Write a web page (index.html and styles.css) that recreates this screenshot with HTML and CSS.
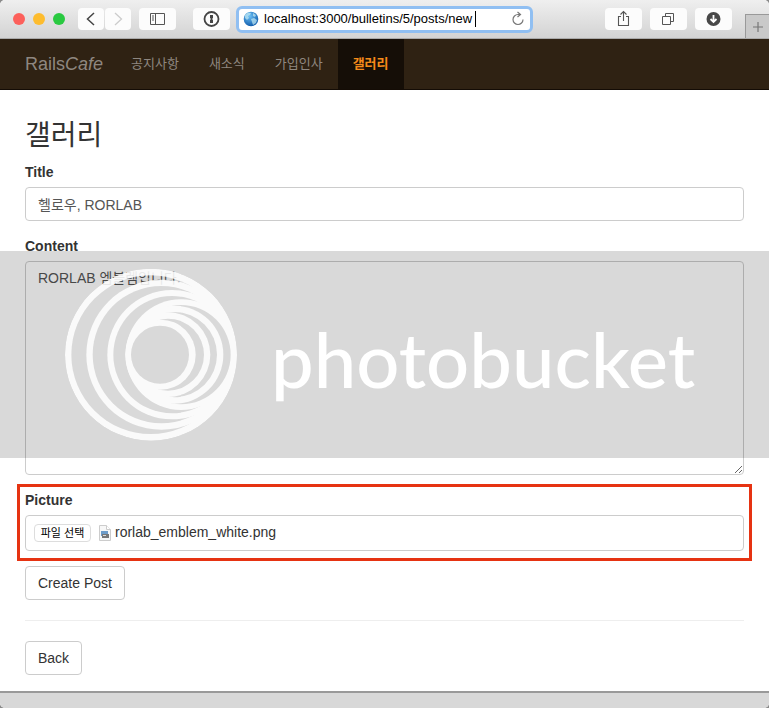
FILE: index.html
```html
<!DOCTYPE html>
<html lang="ko">
<head>
<meta charset="utf-8">
<meta name="viewport" content="width=device-width, initial-scale=1">
<title>RailsCafe</title>
<link rel="stylesheet" href="styles.css">
</head>
<body>
<div class="window">
  <header class="toolbar">
    <div class="lights"><span class="light red"></span><span class="light yellow"></span><span class="light green"></span></div>
    <div class="history">
      <button class="tool" type="button" aria-label="Back"><svg width="26" height="22" viewBox="0 0 26 22"><path d="M16 5L9.500 11l6.500 6" fill="none" stroke="#444" stroke-width="1.500"/></svg></button>
      <button class="tool" type="button" aria-label="Forward"><svg width="25" height="22" viewBox="0 0 25 22"><path d="M10 5l6.500 6-6.500 6" fill="none" stroke="#ccc" stroke-width="1.300"/></svg></button>
    </div>
    <button class="tool wide" type="button" aria-label="Sidebar"><svg width="37" height="22" viewBox="0 0 37 22"><path d="M11.500 5.500h14v11h-14zM16.500 5.500v11M13 8h2M13 10h2M13 12h2" fill="none" stroke="#555"/></svg></button>
    <button class="tool wide password" type="button" aria-label="Passwords"><svg width="37" height="22" viewBox="0 0 37 22"><circle cx="18.500" cy="11" r="7" fill="none" stroke="#444" stroke-width="1.800"/><path d="M17 7h3v3l-1 1 1 1v3h-3v-3l1-1-1-1z" fill="#444"/></svg></button>
    <div class="address">
      <svg width="16" height="16" viewBox="0 0 16 16"><defs><radialGradient id="sea" cx=".4" cy=".3" r=".7"><stop offset="0" stop-color="#6cc0f5"/><stop offset="1" stop-color="#135fae"/></radialGradient></defs><circle cx="8" cy="8" r="7.300" fill="url(#sea)"/><path d="M2 4l3-2.500 3 .5-1 2-2 1 1 2-2 2-2-2zM8 8l3-1 3 2-1 3-3 2-1-3zM10 2l3 2-1 2-2-1z" fill="#c5ebf4" opacity=".7"/></svg>
      <input class="url" type="text" aria-label="Address" value="localhost:3000/bulletins/5/posts/new">
      <span class="caret"></span>
      <button class="reload" type="button" aria-label="Reload"><svg width="14" height="16" viewBox="0 0 14 16"><path d="M9 3.500H7a5 5 0 1 0 5 5M6.500 1L9.500 3.500 6.500 6" fill="none" stroke="#777" stroke-width="1.200"/></svg></button>
    </div>
    <div class="actions">
      <button class="tool wide" type="button" aria-label="Share"><svg width="37" height="22" viewBox="0 0 37 22"><path d="M16 8.500h-2.500v9h10v-9H21M18.500 13V4M15.500 6.500l3-3 3 3" fill="none" stroke="#555" stroke-width="1.100"/></svg></button>
      <button class="tool wide" type="button" aria-label="Show tabs"><svg width="37" height="22" viewBox="0 0 37 22"><path d="M12.500 8.500h8v8h-8zM15.500 8.500v-3h8v8h-3" fill="none" stroke="#555"/></svg></button>
      <button class="tool wide" type="button" aria-label="Downloads"><svg width="37" height="22" viewBox="0 0 37 22"><circle cx="18.500" cy="11" r="7" fill="#484848"/><path d="M18.500 7v7M15.500 11l3 3 3-3" fill="none" stroke="#fff" stroke-width="1.800"/></svg></button>
    </div>
    <button class="new-tab" type="button" aria-label="New tab"><svg width="12" height="12" viewBox="0 0 12 12"><path d="M6 1v10M1 6h10" stroke="#777" stroke-width="1.200"/></svg></button>
  </header>

  <nav class="navbar">
    <a class="brand" href="#">Rails<em>Cafe</em></a>
    <a class="item" href="#">공지사항</a>
    <a class="item" href="#">새소식</a>
    <a class="item" href="#">가입인사</a>
    <a class="item active" href="#">갤러리</a>
  </nav>

  <main class="page">
    <h2>갤러리</h2>
    <form>
      <div class="group">
        <label for="title">Title</label>
        <input class="control" id="title" type="text" value="헬로우, RORLAB">
      </div>
      <div class="group content">
        <label for="content">Content</label>
        <textarea class="control" id="content">RORLAB 엠블렘입니다.</textarea>
        <div class="watermark">
          <svg width="172" height="174" viewBox="75 57 516 518">
            <mask id="rings" maskUnits="userSpaceOnUse" x="75" y="57" width="516" height="518">
              <g fill="#fff"><circle cx="333" cy="315" r="258"/></g>
              <circle cx="332" cy="315" r="238"/>
              <circle cx="364" cy="315" r="225" fill="#fff"/>
              <circle cx="364" cy="315" r="206"/>
              <circle cx="396" cy="315" r="194" fill="#fff"/>
              <circle cx="396" cy="315" r="176"/>
              <circle cx="423" cy="315" r="166" fill="#fff"/>
              <circle cx="423" cy="315" r="149"/>
              <circle cx="403" cy="315" r="147" fill="#fff"/>
              <circle cx="403" cy="315" r="128"/>
              <circle cx="384" cy="315" r="127" fill="#fff"/>
              <circle cx="384" cy="315" r="108"/>
              <circle cx="362" cy="315" r="105" fill="#fff"/>
              <circle cx="360" cy="315" r="87"/>
            </mask>
            <circle cx="333" cy="315" r="258" fill="#fff" mask="url(#rings)"/>
          </svg>
          <span class="wordmark">photobucket</span>
        </div>
      </div>
      <div class="highlight">
        <label for="picture">Picture</label>
        <label class="control picker" for="picture">
          <input class="file" id="picture" type="file">
          <span class="choose">파일 선택</span>
          <svg width="12" height="16" viewBox="0 0 12 16"><path d="M.5.500h7l4 4v11H.5z" fill="#f7f7f7" stroke="#ccc"/><path d="M7.500.500v4h4" fill="#fff" stroke="#ccc"/><path d="M2 6h7v5H2z" fill="#6d9cc9"/><path d="M3 9h7v4H3z" fill="#777"/><path d="M4 10h3v1H4z" fill="#ddd"/></svg>
          <span class="filename">rorlab_emblem_white.png</span>
        </label>
      </div>
      <button class="btn" type="submit">Create Post</button>
    </form>
    <hr>
    <a class="btn" href="#">Back</a>
  </main>
  <footer class="statusbar"></footer>
</div>
</body>
</html>
```
FILE: styles.css
```css
* { box-sizing: border-box; }

body {
  margin: 0;
  background: #8a8a8a;
  color: #333;
  font: 14px/20px "Liberation Sans", "Noto Sans CJK KR", sans-serif;
}

button, input, textarea { font: inherit; }
a { text-decoration: none; }
svg { display: block; flex: none; }

.window {
  display: flex;
  flex-direction: column;
  min-height: 100vh;
  overflow: hidden;
  border-radius: 5px;
  background: #fff;
}

.toolbar {
  display: flex;
  align-items: center;
  height: 39px;
  padding-left: 13px;
  border-bottom: 1px solid #aaa;
  background: linear-gradient(#efefef, #d3d3d3);
}

.lights { display: flex; gap: 8px; margin-right: 13px; }
.light { width: 12px; height: 12px; border-radius: 50%; }
.red { background: #fc605b; }
.yellow { background: #fdbc2e; }
.green { background: #29c940; }

.tool {
  width: 26px;
  height: 22px;
  padding: 0;
  border: 0;
  border-radius: 4px;
  background: #fcfcfc;
}

.history { display: flex; gap: 1px; margin-right: 8px; }
.wide { width: 37px; }
.password { margin-left: 17px; }

.address {
  display: flex;
  flex: 1;
  align-items: center;
  height: 27px;
  margin: 0 72px 0 6px;
  padding: 0 5px 0 4px;
  border: 3px solid #90bff2;
  border-radius: 6px;
  background: #fff;
}

.url {
  width: 216px;
  padding: 0 0 0 5px;
  border: 0;
  outline: 0;
  background: none;
  color: #000;
  font-size: 13px;
}

.caret { width: 1px; height: 16px; background: #000; }
.reload { margin-left: auto; padding: 0; border: 0; background: none; }
.actions { display: flex; gap: 8px; margin-right: 13px; }

.new-tab {
  display: flex;
  align-items: center;
  justify-content: center;
  align-self: flex-end;
  width: 24px;
  height: 24px;
  padding: 0;
  border: solid #999;
  border-width: 1px 0 0 1px;
  background: #c9c9c9;
}

.navbar {
  display: flex;
  height: 51px;
  padding-left: 25px;
  border-bottom: 1px solid #140c05;
  background: #2f2213;
  line-height: 50px;
}

.brand { padding-right: 13px; color: #8e8780; font-size: 18px; }
.item { padding: 0 15px; color: #8e8780; font-size: 13px; }
.active { background: #150e07; color: #f58b1a; font-weight: 700; }

.page { flex: 1; padding: 29px 25px 16px; }

h2 {
  margin: 0 0 10px;
  font-size: 28px;
  font-weight: 400;
  line-height: 33px;
}

label { display: block; margin-bottom: 5px; font-weight: 700; }
.group { margin-bottom: 15px; }
.content { position: relative; margin-bottom: 9px; }

.control {
  display: block;
  width: 100%;
  height: 34px;
  margin: 0;
  padding: 6px 12px;
  border: 1px solid #ccc;
  border-radius: 4px;
  background: #fff;
  color: #555;
}

textarea.control { height: 214px; }

/* Translucent band across the full window width, over the text box */
.watermark {
  position: absolute;
  top: 15px;
  right: -25px;
  left: -25px;
  display: flex;
  align-items: center;
  gap: 34px;
  height: 207px;
  padding-left: 65px;
  background: rgba(0, 0, 0, .15);
  color: #fff;
  pointer-events: none;
}

.watermark svg { opacity: .88; }
.wordmark { padding-top: 8px; font: 500 76px/80px Lato, sans-serif; }

.highlight {
  margin: 0 -8px 5px;
  padding: 3px 5px 7px;
  border: 3px solid #e63312;
}

.picker {
  display: flex;
  align-items: center;
  height: 36px;
  padding: 0 8px;
  color: #333;
  font-weight: 400;
}

.file { position: absolute; width: 1px; height: 1px; opacity: 0; }

.choose {
  width: 57px;
  margin-right: 8px;
  border: 1px solid #ddd;
  border-radius: 4px;
  color: #000;
  font-size: 11px;
  line-height: 16px;
  text-align: center;
}

.filename { margin-left: 4px; padding-bottom: 2px; }

.btn {
  display: inline-block;
  height: 34px;
  padding: 6px 12px;
  border: 1px solid #ccc;
  border-radius: 4px;
  background: #fff;
  color: #333;
}

form .btn { display: block; }
hr { margin: 20px 0; border: 0; border-top: 1px solid #eee; }

.statusbar { height: 17px; border-top: 2px solid #999; background: #d8d8d8; }
```
